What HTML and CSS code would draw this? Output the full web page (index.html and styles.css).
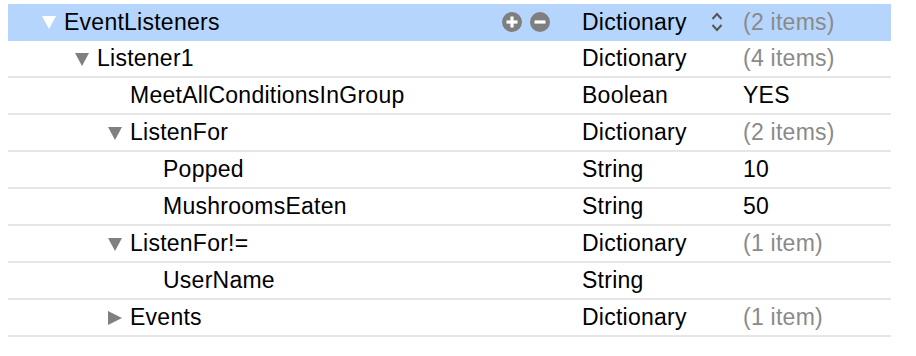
FILE: index.html
```html
<html>
  <head>
    <link rel="stylesheet" href="styles.css">
  </head>
  <body>
    <div class="plist">
      <div class="row selected">
        <div class="key level-0">
          <span class="disclosure open"></span>
          <span class="name">EventListeners</span>
          <span class="row-buttons">
            <span class="round-btn">
              <svg width="20" height="20" viewBox="0 0 20 20"><circle cx="10" cy="10" r="10" fill="#7f7f7f"/><rect x="4.5" y="8.4" width="11" height="3.2" fill="#fff"/><rect x="8.4" y="4.5" width="3.2" height="11" fill="#fff"/></svg>
            </span>
            <span class="round-btn">
              <svg width="20" height="20" viewBox="0 0 20 20"><circle cx="10" cy="10" r="10" fill="#7f7f7f"/><rect x="4.5" y="8.4" width="11" height="3.2" fill="#fff"/></svg>
            </span>
          </span>
        </div>
        <div class="type">
          <span>Dictionary</span>
          <svg class="stepper" width="12" height="22" viewBox="0 0 12 22"><path d="M1.5 8 L6 3 L10.5 8" fill="none" stroke="#555" stroke-width="2"/><path d="M1.5 14 L6 19 L10.5 14" fill="none" stroke="#555" stroke-width="2"/></svg>
        </div>
        <div class="value muted">(2 items)</div>
      </div>
      <div class="row">
        <div class="key level-1"><span class="disclosure open"></span><span class="name">Listener1</span></div>
        <div class="type">Dictionary</div>
        <div class="value muted">(4 items)</div>
      </div>
      <div class="row">
        <div class="key level-2"><span class="disclosure"></span><span class="name">MeetAllConditionsInGroup</span></div>
        <div class="type">Boolean</div>
        <div class="value">YES</div>
      </div>
      <div class="row">
        <div class="key level-2"><span class="disclosure open"></span><span class="name">ListenFor</span></div>
        <div class="type">Dictionary</div>
        <div class="value muted">(2 items)</div>
      </div>
      <div class="row">
        <div class="key level-3"><span class="disclosure"></span><span class="name">Popped</span></div>
        <div class="type">String</div>
        <div class="value">10</div>
      </div>
      <div class="row">
        <div class="key level-3"><span class="disclosure"></span><span class="name">MushroomsEaten</span></div>
        <div class="type">String</div>
        <div class="value">50</div>
      </div>
      <div class="row">
        <div class="key level-2"><span class="disclosure open"></span><span class="name">ListenFor!=</span></div>
        <div class="type">Dictionary</div>
        <div class="value muted">(1 item)</div>
      </div>
      <div class="row">
        <div class="key level-3"><span class="disclosure"></span><span class="name">UserName</span></div>
        <div class="type">String</div>
        <div class="value"></div>
      </div>
      <div class="row">
        <div class="key level-2"><span class="disclosure closed"></span><span class="name">Events</span></div>
        <div class="type">Dictionary</div>
        <div class="value muted">(1 item)</div>
      </div>
    </div>
  </body>
</html>
```

FILE: styles.css
```css
body {
    margin: 0;
    background: #fff;
    font-family: "Liberation Sans", Arial, sans-serif;
    font-size: 23px;
    letter-spacing: 0.25px;
    color: #000;
}
.plist {
    width: 883px;
    padding: 4px 0 0 8px;
}
.row {
    display: flex;
    align-items: center;
    height: 35px;
    border-bottom: 2px solid #e6e6e6;
}
.row.selected {
    height: 36px;
    border-bottom: 1px solid #b5d5fc;
    background: #b5d5fc;
}
.key {
    width: 574px;
    display: flex;
    align-items: center;
    box-sizing: border-box;
    padding-right: 32px;
}
.level-0 { padding-left: 34px; }
.level-1 { padding-left: 67px; }
.level-2 { padding-left: 100px; }
.level-3 { padding-left: 133px; }
.disclosure {
    width: 22px;
    height: 14px;
    flex: none;
    position: relative;
}
.disclosure.open::before {
    content: "";
    position: absolute;
    left: 0;
    top: 1px;
    border-left: 7.5px solid transparent;
    border-right: 7.5px solid transparent;
    border-top: 13px solid #808080;
}
.disclosure.closed::before {
    content: "";
    position: absolute;
    left: 0;
    top: 0;
    border-top: 7.5px solid transparent;
    border-bottom: 7.5px solid transparent;
    border-left: 14px solid #808080;
}
.selected .disclosure.open::before {
    border-top-color: #fff;
}
.row-buttons {
    margin-left: auto;
    display: flex;
    gap: 8px;
}
.round-btn {
    display: flex;
}
.type {
    width: 161px;
    display: flex;
    align-items: center;
    box-sizing: border-box;
    padding-right: 20px;
}
.stepper {
    margin-left: auto;
}
.value {
    flex: 1;
}
.muted {
    color: #8a8a8a;
}
```
